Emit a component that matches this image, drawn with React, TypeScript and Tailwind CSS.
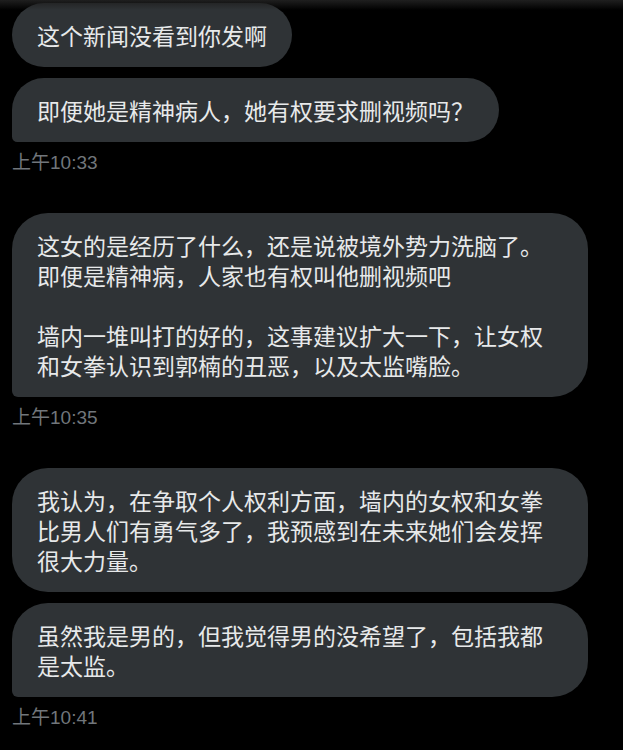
import React from "react";

type Msg = { lines: string[]; shape: "pill" | "tail" };
type Group = { messages: Msg[]; time: string };

const groups: Group[] = [
  {
    time: "上午10:33",
    messages: [
      { lines: ["这个新闻没看到你发啊"], shape: "pill" },
      { lines: ["即便她是精神病人，她有权要求删视频吗？"], shape: "tail" },
    ],
  },
  {
    time: "上午10:35",
    messages: [
      {
        lines: [
          "这女的是经历了什么，还是说被境外势力洗脑了。",
          "即便是精神病，人家也有权叫他删视频吧",
          "",
          "墙内一堆叫打的好的，这事建议扩大一下，让女权和女拳认识到郭楠的丑恶，以及太监嘴脸。",
        ],
        shape: "tail",
      },
    ],
  },
  {
    time: "上午10:41",
    messages: [
      {
        lines: ["我认为，在争取个人权利方面，墙内的女权和女拳比男人们有勇气多了，我预感到在未来她们会发挥很大力量。"],
        shape: "pill",
      },
      { lines: ["虽然我是男的，但我觉得男的没希望了，包括我都是太监。"], shape: "tail" },
    ],
  },
];

const font = { fontFamily: '"Noto Sans CJK SC", "Liberation Sans", sans-serif' };
const timeFont = { fontFamily: '"Liberation Sans", "Noto Sans CJK SC", sans-serif' };

function Bubble({ msg }: { msg: Msg }) {
  return (
    <div
      className={
        "max-w-[576px] self-start bg-[#2f3336] px-[25px] py-[17px] text-[23px] leading-[30px] text-[#e7e9ea] " +
        (msg.shape === "pill" ? "rounded-[36px]" : "rounded-[36px] rounded-bl-[6px]")
      }
    >
      {msg.lines.map((l, i) => (
        <div key={i} className="whitespace-pre-wrap">
          {l === "" ? "\u00a0" : l}
        </div>
      ))}
    </div>
  );
}

export default function App() {
  return (
    <div className="relative min-h-[750px] w-full overflow-hidden bg-black" style={font}>
      <div className="pointer-events-none absolute left-0 right-0 top-0 h-[10px] bg-gradient-to-b from-[#1f1f1f] to-transparent" />
      <div className="flex flex-col px-3 pt-[3px]">
        {groups.map((g, gi) => (
          <div key={gi} className="mb-[39px] flex flex-col">
            <div className="flex flex-col gap-[11px]">
              {g.messages.map((m, mi) => (
                <Bubble key={mi} msg={m} />
              ))}
            </div>
            <div className="mt-[10px] h-[22px] text-[19px] leading-[22px] text-[#71767b]" style={timeFont}>
              {g.time}
            </div>
          </div>
        ))}
      </div>
    </div>
  );
}
